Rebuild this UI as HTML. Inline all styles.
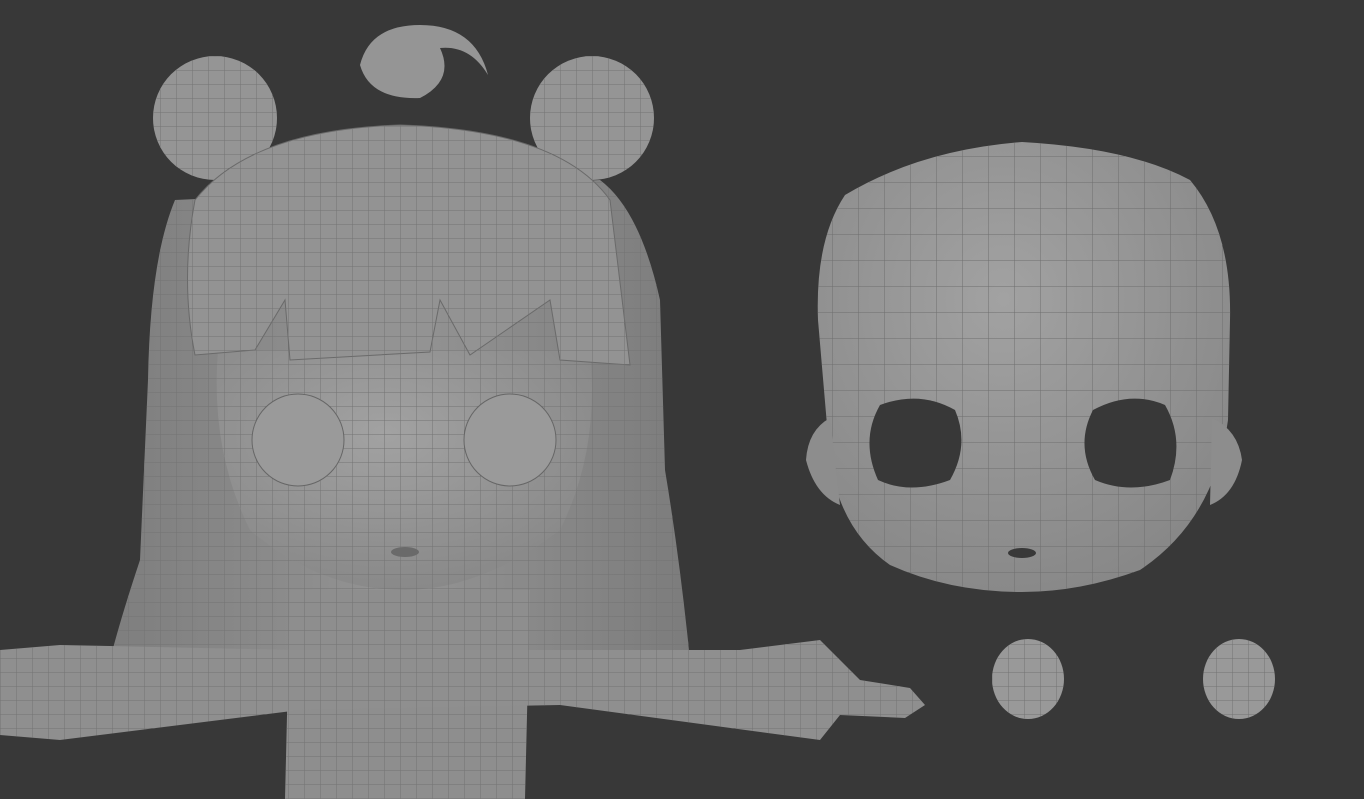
<!DOCTYPE html>
<html><head><meta charset="utf-8"><style>html,body{margin:0;padding:0;background:#383838;overflow:hidden}svg{display:block}</style></head><body>
<svg width="1364" height="799" viewBox="0 0 1364 799" xmlns="http://www.w3.org/2000/svg">
<defs>
<pattern id="g" width="26" height="26" patternUnits="userSpaceOnUse"><path d="M0 0H26M0 0V26" stroke="#6e6e6e" stroke-width="1" fill="none"/></pattern>
<pattern id="gs" width="16" height="14" patternUnits="userSpaceOnUse"><path d="M0 0H16M0 0V14" stroke="#737373" stroke-width="1" fill="none"/></pattern>
<radialGradient id="sh" cx="0.45" cy="0.35" r="0.75"><stop offset="0" stop-color="#a2a2a2"/><stop offset="1" stop-color="#858585"/></radialGradient>
<linearGradient id="hb" x1="0" x2="1"><stop offset="0" stop-color="#7e7e7e"/><stop offset="0.5" stop-color="#949494"/><stop offset="1" stop-color="#7c7c7c"/></linearGradient>
</defs>
<rect width="1364" height="799" fill="#383838"/>
<!-- back hair -->
<path d="M175 200 Q150 260 148 380 L140 560 Q120 620 110 660 L250 670 L560 670 L690 660 Q680 560 665 470 L660 300 Q640 210 600 180 Z" fill="url(#hb)"/>
<path d="M175 200 Q150 260 148 380 L140 560 Q120 620 110 660 L250 670 L560 670 L690 660 Q680 560 665 470 L660 300 Q640 210 600 180 Z" fill="url(#gs)"/>
<!-- ears -->
<circle cx="215" cy="118" r="62" fill="#959595"/><circle cx="215" cy="118" r="62" fill="url(#gs)"/>
<circle cx="592" cy="118" r="62" fill="#959595"/><circle cx="592" cy="118" r="62" fill="url(#gs)"/>
<!-- ahoge -->
<path d="M360 65 Q370 25 420 25 Q475 25 488 75 Q470 45 440 48 Q455 80 420 98 Q370 100 360 65Z" fill="#959595"/>
<!-- body -->
<path d="M290 590 L530 590 L525 799 L285 799Z" fill="#8e8e8e"/><path d="M290 590 L530 590 L525 799 L285 799Z" fill="url(#gs)"/>
<!-- arms -->
<path d="M0 650 L60 645 L300 650 L560 650 L740 650 L820 640 L860 680 L910 688 L925 705 L905 718 L840 715 L820 740 L560 705 L300 710 L60 740 L0 735Z" fill="#8f8f8f"/>
<path d="M0 650 L60 645 L300 650 L560 650 L740 650 L820 640 L860 680 L910 688 L925 705 L905 718 L840 715 L820 740 L560 705 L300 710 L60 740 L0 735Z" fill="url(#gs)"/>
<!-- face -->
<path d="M218 350 L590 350 Q600 450 560 530 Q480 590 405 590 Q320 590 250 530 Q210 450 218 350Z" fill="url(#sh)"/>
<path d="M218 350 L590 350 Q600 450 560 530 Q480 590 405 590 Q320 590 250 530 Q210 450 218 350Z" fill="url(#gs)"/>
<circle cx="298" cy="440" r="46" fill="#9a9a9a" stroke="#666"/><circle cx="510" cy="440" r="46" fill="#9a9a9a" stroke="#666"/>
<ellipse cx="405" cy="552" rx="14" ry="5" fill="#6a6a6a"/>
<!-- bangs -->
<path d="M195 200 Q250 130 400 125 Q560 130 610 200 L630 365 L560 360 L550 300 L470 355 L440 300 L430 352 L290 360 L285 300 L255 350 L195 355 Q180 280 195 200Z" fill="#939393" stroke="#6a6a6a"/>
<path d="M195 200 Q250 130 400 125 Q560 130 610 200 L630 365 L560 360 L550 300 L470 355 L440 300 L430 352 L290 360 L285 300 L255 350 L195 355 Q180 280 195 200Z" fill="url(#gs)"/>
<!-- right head -->
<path d="M845 195 Q920 150 1022 142 Q1130 148 1190 180 Q1232 230 1230 320 L1228 420 Q1215 520 1140 570 Q1080 592 1022 592 Q950 592 890 565 Q840 530 830 460 L818 320 Q815 240 845 195Z" fill="url(#sh)"/>
<path d="M845 195 Q920 150 1022 142 Q1130 148 1190 180 Q1232 230 1230 320 L1228 420 Q1215 520 1140 570 Q1080 592 1022 592 Q950 592 890 565 Q840 530 830 460 L818 320 Q815 240 845 195Z" fill="url(#g)"/>
<path d="M830 418 Q808 430 806 460 Q815 495 840 505Z" fill="#8d8d8d"/>
<path d="M1212 418 Q1238 430 1242 460 Q1235 495 1210 505Z" fill="#8d8d8d"/>
<path d="M880 405 Q920 390 955 410 Q970 445 950 480 Q910 495 878 480 Q860 440 880 405Z" fill="#383838"/>
<path d="M1093 410 Q1130 390 1165 405 Q1185 440 1170 480 Q1130 495 1095 480 Q1075 445 1093 410Z" fill="#383838"/>
<ellipse cx="1022" cy="553" rx="14" ry="5" fill="#383838"/>
<!-- small eyes -->
<ellipse cx="1028" cy="679" rx="36" ry="40" fill="#999"/><ellipse cx="1028" cy="679" rx="36" ry="40" fill="url(#gs)"/>
<ellipse cx="1239" cy="679" rx="36" ry="40" fill="#999"/><ellipse cx="1239" cy="679" rx="36" ry="40" fill="url(#gs)"/>
</svg>
</body></html>
